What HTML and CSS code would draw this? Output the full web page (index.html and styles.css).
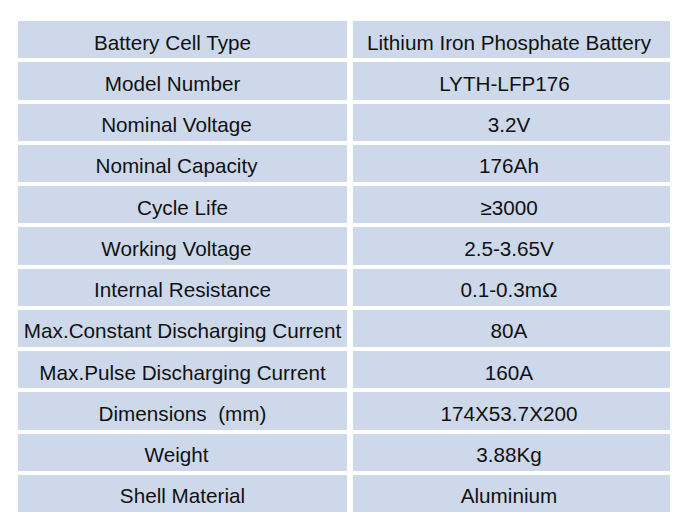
FILE: index.html
```html
<!DOCTYPE html>
<html lang="en">
<head>
<meta charset="utf-8">
<title>Battery Specifications</title>
<link rel="stylesheet" href="styles.css">
</head>
<body>
<div class="page">
  <div class="spec-table">
    <div class="cell key shift">Battery Cell Type</div><div class="cell val">Lithium Iron Phosphate Battery</div>
    <div class="cell key shift">Model Number</div><div class="cell val shift-v">LYTH-LFP176</div>
    <div class="cell key shift-sm">Nominal Voltage</div><div class="cell val">3.2V</div>
    <div class="cell key shift-sm">Nominal Capacity</div><div class="cell val">176Ah</div>
    <div class="cell key">Cycle Life</div><div class="cell val">≥3000</div>
    <div class="cell key shift-sm">Working Voltage</div><div class="cell val">2.5-3.65V</div>
    <div class="cell key">Internal Resistance</div><div class="cell val">0.1-0.3mΩ</div>
    <div class="cell key">Max.Constant Discharging Current</div><div class="cell val">80A</div>
    <div class="cell key">Max.Pulse Discharging Current</div><div class="cell val">160A</div>
    <div class="cell key">Dimensions&nbsp; (mm)</div><div class="cell val">174X53.7X200</div>
    <div class="cell key shift-sm">Weight</div><div class="cell val">3.88Kg</div>
    <div class="cell key">Shell Material</div><div class="cell val">Aluminium</div>
  </div>
</div>
</body>
</html>
```

FILE: styles.css
```css
html, body {
  margin: 0;
  padding: 0;
  background: #ffffff;
}

.page {
  padding: 21px 0 0 18px;
  font-family: "Liberation Sans", Arial, sans-serif;
  color: #111111;
}

.spec-table {
  display: grid;
  grid-template-columns: 329px 317px;
  grid-auto-rows: 37.25px;
  column-gap: 6px;
  row-gap: 4px;
}

.cell {
  background: #cdd9eb;
  display: flex;
  align-items: center;
  justify-content: center;
  box-sizing: border-box;
  padding-top: 6px;
  font-size: 20.7px;
  white-space: nowrap;
}

.key.shift {
  padding-right: 20px;
}

.key.shift-sm {
  padding-right: 12px;
}

.val {
  padding-right: 5px;
}

.val.shift-v {
  padding-right: 14px;
}
```
